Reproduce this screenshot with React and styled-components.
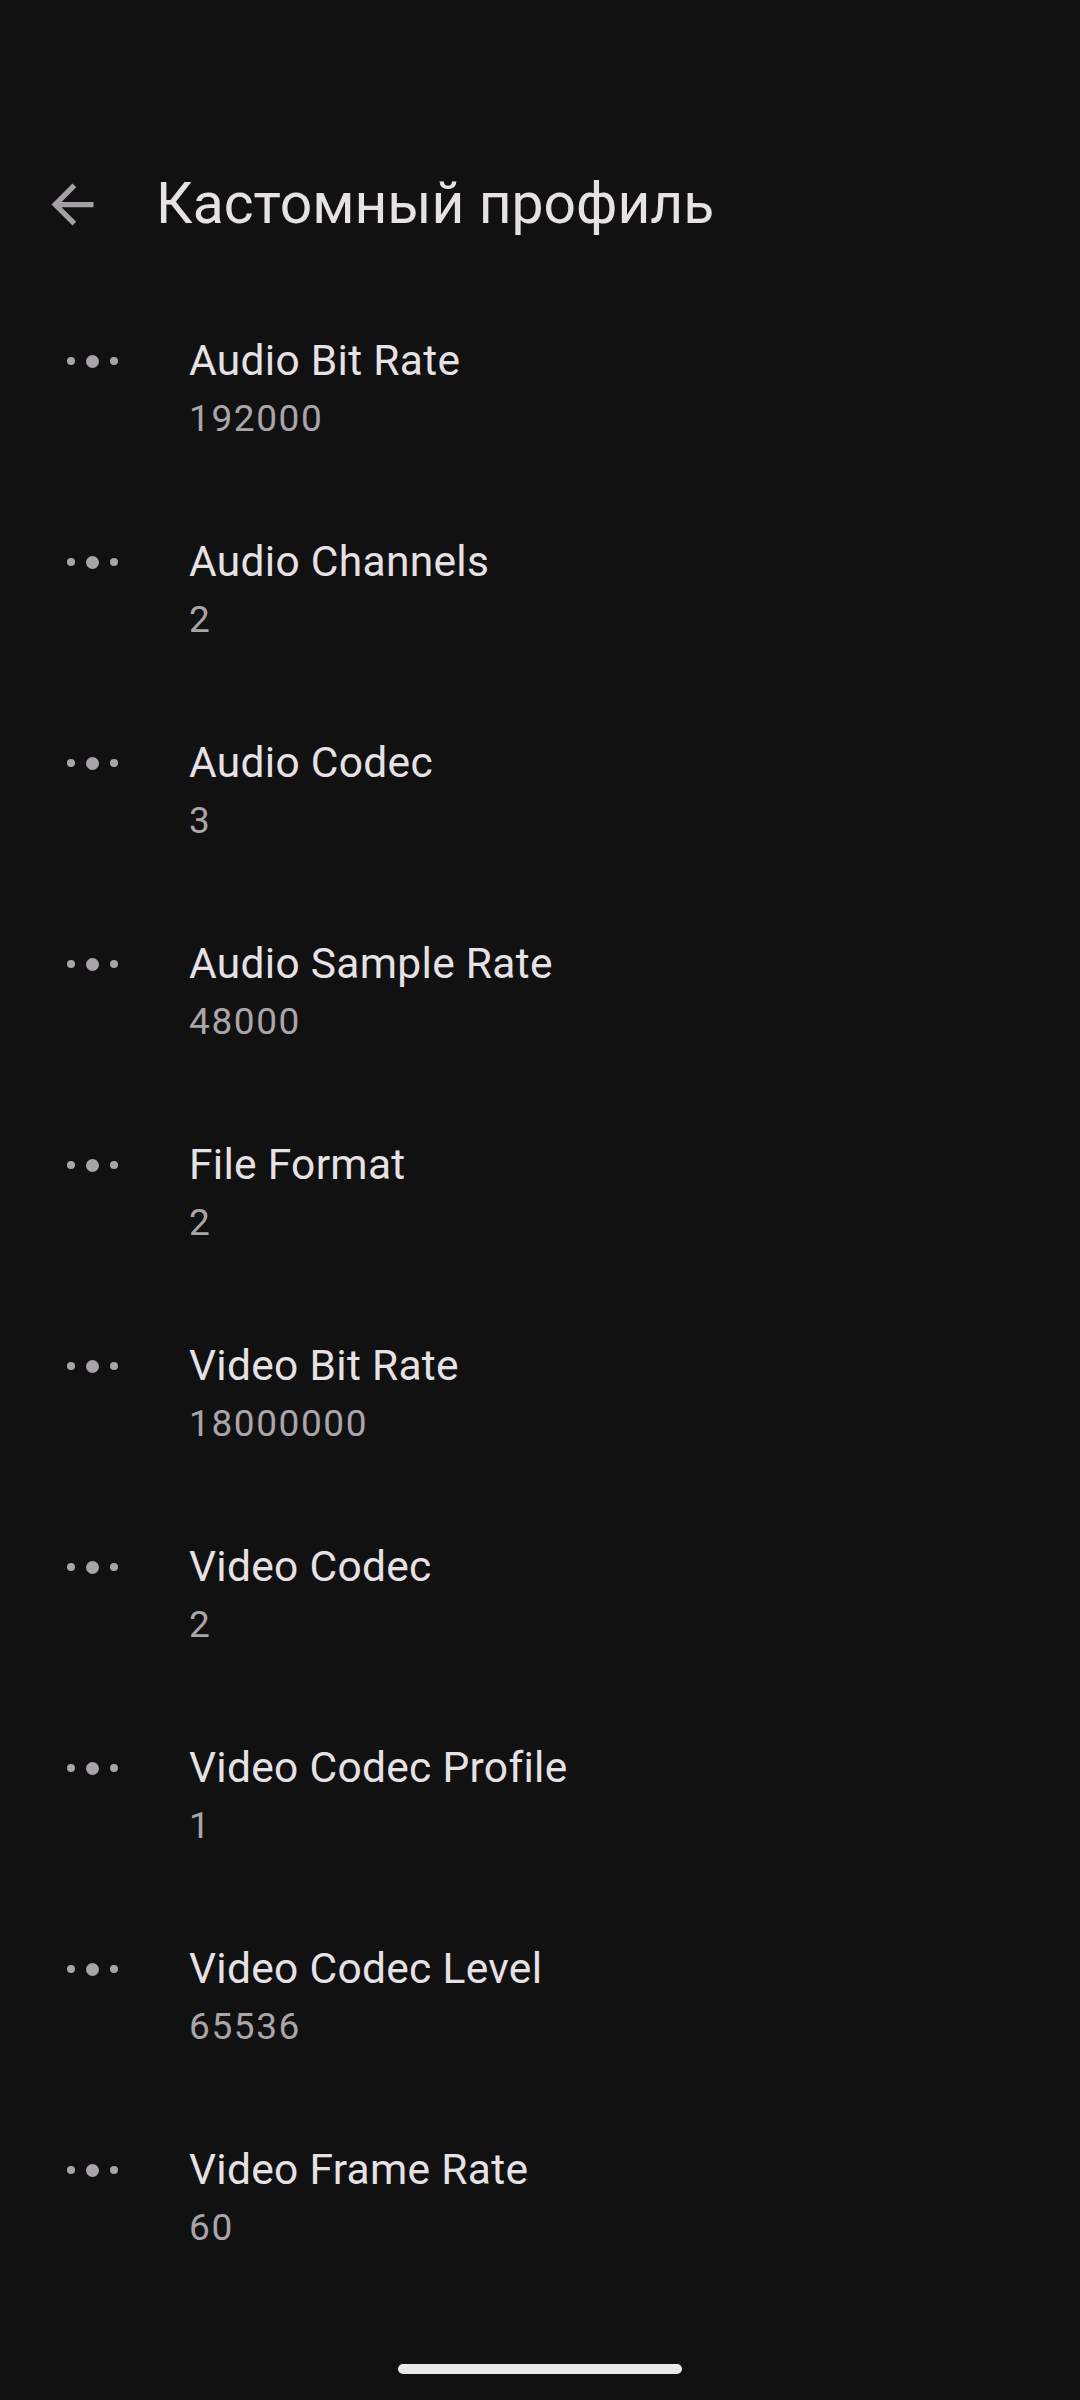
import React from "react";
import styled, { createGlobalStyle } from "styled-components";

const GlobalStyle = createGlobalStyle`
  html, body {
    margin: 0;
    padding: 0;
    background: #111111;
  }
  body {
    font-family: Roboto, "Noto Sans", sans-serif;
    -webkit-font-smoothing: antialiased;
  }
`;

const settings = [
  { name: "Audio Bit Rate", value: "192000" },
  { name: "Audio Channels", value: "2" },
  { name: "Audio Codec", value: "3" },
  { name: "Audio Sample Rate", value: "48000" },
  { name: "File Format", value: "2" },
  { name: "Video Bit Rate", value: "18000000" },
  { name: "Video Codec", value: "2" },
  { name: "Video Codec Profile", value: "1" },
  { name: "Video Codec Level", value: "65536" },
  { name: "Video Frame Rate", value: "60" }
];

const BackArrow = () => (
  <svg width="63" height="63" viewBox="0 0 24 24" fill="#a4a0a6">
    <path d="M20 11H7.83l5.59-5.59L12 4l-8 8 8 8 1.41-1.41L7.83 13H20v-2z" />
  </svg>
);

const App = () => {
  return (
    <Page>
      <GlobalStyle />
      <Header>
        <BackButton>
          <BackArrow />
        </BackButton>
        <Title>Кастомный профиль</Title>
      </Header>
      <List>
        {settings.map((item) => (
          <Row key={item.name}>
            <Handle>
              <Dot />
              <Dot big />
              <Dot />
            </Handle>
            <Texts>
              <Name>{item.name}</Name>
              <Value>{item.value}</Value>
            </Texts>
          </Row>
        ))}
      </List>
      <NavBar>
        <HomeIndicator />
      </NavBar>
    </Page>
  );
};

export default App;

const Page = styled.div`
  min-height: 2400px;
  display: flex;
  flex-direction: column;
  background: #111111;
`;

const Header = styled.div`
  display: flex;
  align-items: center;
  height: 130px;
  margin-top: 139px;
  padding-left: 41px;
`;

const BackButton = styled.div`
  width: 63px;
  height: 63px;
  display: flex;
  svg {
    display: block;
  }
`;

const Title = styled.h1`
  margin: 0 0 0 52px;
  font-size: 57px;
  font-weight: 400;
  color: #e6e1e5;
  line-height: 70px;
`;

const List = styled.div`
  display: flex;
  flex-direction: column;
  padding-top: 20px;
`;

const Row = styled.div`
  display: flex;
  align-items: flex-start;
  height: 201px;
  box-sizing: border-box;
  padding-top: 43px;
`;

const Handle = styled.div`
  width: 189px;
  height: 58px;
  box-sizing: border-box;
  padding-left: 67px;
  display: flex;
  align-items: center;
  gap: 11px;
`;

const Dot = styled.span`
  width: ${(p) => (p.big ? "13px" : "8px")};
  height: ${(p) => (p.big ? "13px" : "8px")};
  border-radius: 50%;
  background: #a8a4aa;
  flex-shrink: 0;
`;

const Texts = styled.div`
  display: flex;
  flex-direction: column;
`;

const Name = styled.div`
  font-size: 42.5px;
  line-height: 58px;
  letter-spacing: 0.3px;
  color: #e6e1e5;
`;

const Value = styled.div`
  margin-top: 2px;
  font-size: 37px;
  line-height: 54px;
  letter-spacing: 1.6px;
  color: #a9a5aa;
`;

const NavBar = styled.div`
  flex: 1;
  display: flex;
  justify-content: center;
  align-items: flex-end;
  padding-bottom: 26px;
`;

const HomeIndicator = styled.div`
  width: 284px;
  height: 10px;
  border-radius: 5px;
  background: #e8e8e8;
`;
